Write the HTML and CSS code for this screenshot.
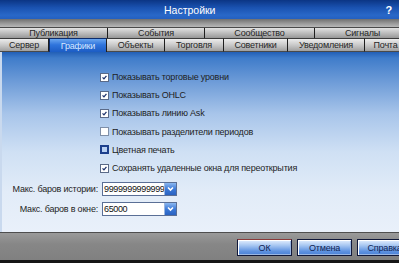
FILE: index.html
```html
<!DOCTYPE html>
<html lang="ru">
<head>
<meta charset="utf-8">
<title>Настройки</title>
<link rel="stylesheet" href="styles.css">
</head>
<body>
<div class="window">
  <div class="titlebar">
    <span class="title">Настройки</span>
    <span class="help">?</span>
  </div>
  <div class="sep"></div>
  <div class="tabrow upper">
    <div class="tab w-pub">Публикация</div>
    <div class="tab w-evt">События</div>
    <div class="tab w-com">Сообщество</div>
    <div class="tab w-sig">Сигналы</div>
  </div>
  <div class="tabrow lower">
    <div class="tab w-srv">Сервер</div>
    <div class="tab w-gr active">Графики</div>
    <div class="tab w-obj">Объекты</div>
    <div class="tab w-trd">Торговля</div>
    <div class="tab w-adv">Советники</div>
    <div class="tab w-ntf">Уведомления</div>
    <div class="tab w-mail">Почта</div>
  </div>
  <div class="content">
    <ul class="checks">
      <li><span class="box checked"><svg viewBox="0 0 9 9"><path d="M2 4.3 L3.8 6.2 L7 2.4" fill="none" stroke="#1a2f6a" stroke-width="1.6"/></svg></span>Показывать торговые уровни</li>
      <li><span class="box checked"><svg viewBox="0 0 9 9"><path d="M2 4.3 L3.8 6.2 L7 2.4" fill="none" stroke="#1a2f6a" stroke-width="1.6"/></svg></span>Показывать OHLC</li>
      <li><span class="box checked"><svg viewBox="0 0 9 9"><path d="M2 4.3 L3.8 6.2 L7 2.4" fill="none" stroke="#1a2f6a" stroke-width="1.6"/></svg></span>Показывать линию Ask</li>
      <li><span class="box"></span>Показывать разделители периодов</li>
      <li><span class="box hover"></span>Цветная печать</li>
      <li><span class="box checked"><svg viewBox="0 0 9 9"><path d="M2 4.3 L3.8 6.2 L7 2.4" fill="none" stroke="#1a2f6a" stroke-width="1.6"/></svg></span>Сохранять удаленные окна для переоткрытия</li>
    </ul>
    <div class="fields">
      <label class="lbl">Макс. баров истории:</label>
      <div class="combo"><span class="val">9999999999999<span class="caret"></span></span><span class="drop"><svg viewBox="0 0 11 12"><path d="M3 4.5 L5.5 7 L8 4.5" fill="none" stroke="#fff" stroke-width="1.6"/></svg></span></div>
      <label class="lbl">Макс. баров в окне:</label>
      <div class="combo"><span class="val">65000</span><span class="drop"><svg viewBox="0 0 11 12"><path d="M3 4.5 L5.5 7 L8 4.5" fill="none" stroke="#fff" stroke-width="1.6"/></svg></span></div>
    </div>
  </div>
  <div class="footer">
    <button class="btn focus">ОК</button>
    <button class="btn">Отмена</button>
    <button class="btn">Справка</button>
  </div>
</div>
</body>
</html>
```

FILE: styles.css
```css
html, body {
  margin: 0;
  padding: 0;
}
body {
  width: 399px;
  height: 263px;
  overflow: hidden;
  font-family: "Liberation Sans", Arial, sans-serif;
  font-size: 9px;
  letter-spacing: -0.2px;
  color: #1e1e1e;
}
.window {
  display: flex;
  flex-direction: column;
  width: 399px;
  height: 263px;
  overflow: hidden;
}
.titlebar {
  flex: none;
  height: 19px;
  display: flex;
  align-items: center;
  background: linear-gradient(#0b3584, #1a52b0 40%, #2968c8 80%, #2460c0);
}
.title {
  margin-left: 164px;
  color: #fff;
  font-size: 10.5px;
  letter-spacing: 0;
}
.help {
  margin-left: auto;
  margin-right: 7px;
  color: #fff;
  font-weight: bold;
  font-size: 11px;
}
.sep {
  flex: none;
  height: 8px;
  background: linear-gradient(#6f6f6f, #9d9d9d 60%, #b8b8b8);
}
.tabrow {
  flex: none;
  display: flex;
}
.upper {
  height: 11px;
  border-top: 1px solid #4a4a4a;
  box-sizing: border-box;
}
.lower {
  height: 14px;
}
.tab {
  flex: none;
  box-sizing: border-box;
  display: flex;
  align-items: center;
  justify-content: center;
  border-right: 1px solid #1e1e1e;
  color: #262626;
  background: linear-gradient(#ececec, #c9c9c9 50%, #9f9f9f);
  white-space: nowrap;
}
.upper .tab {
  background: linear-gradient(#e2e2e2, #bdbdbd 50%, #979797);
}
.lower .tab {
  border-top: 1px solid #3c3c3c;
  border-bottom: 1px solid #4a4a4a;
}
.tab.active {
  color: #d6e8ff;
  border-top: 1px solid #0c2c6c;
  border-left: 1px solid #0c2c6c;
  border-bottom: none;
  background: linear-gradient(#6aa6f0, #2f74dc 45%, #1c5cc4);
}
.w-pub { width: 108px; }
.w-evt { width: 97px; }
.w-com { width: 110px; }
.w-sig { width: 96px; }
.w-srv { width: 49px; }
.w-gr { width: 58px; }
.w-obj { width: 58px; }
.w-trd { width: 59px; }
.w-adv { width: 64px; }
.w-ntf { width: 77px; }
.w-mail { width: 42px; }

.content {
  flex: none;
  height: 180px;
  box-sizing: border-box;
  border-left: 2px solid #c9d9ee;
  background: linear-gradient(#225fb6 0, #3f7cca 6px, #6e9cd8 30px, #a8c5ea 62px, #cfe0f4 100px, #e2ecf8 140px, #e9f0fa 180px);
}
.checks {
  list-style: none;
  margin: 0;
  padding: 16px 0 0 98px;
}
.checks li {
  height: 18.2px;
  display: flex;
  align-items: center;
  white-space: nowrap;
}
.box {
  flex: none;
  width: 9px;
  height: 9px;
  box-sizing: border-box;
  margin-right: 3px;
  border: 1px solid #7f8fa8;
  background: #fff;
  display: flex;
}
.box svg {
  width: 7px;
  height: 7px;
  margin: 0;
}
.box.checked {
  border-color: #5a6a88;
}
.box.hover {
  border: 2px solid #1c3f8c;
  background: #b8d0f2;
}
.fields {
  display: grid;
  grid-template-columns: 96px 75px;
  column-gap: 4px;
  row-gap: 6px;
  margin-top: 5px;
}
.lbl {
  text-align: right;
  align-self: center;
  white-space: nowrap;
}
.combo {
  height: 14px;
  box-sizing: border-box;
  border: 1px solid #5a6f96;
  background: #fff;
  display: flex;
  align-items: stretch;
}
.val {
  flex: 1;
  min-width: 0;
  padding-left: 1px;
  display: flex;
  align-items: center;
  color: #111;
  letter-spacing: -0.35px;
  overflow: hidden;
}
.caret {
  flex: none;
  width: 1px;
  height: 10px;
  background: #000;
  margin-left: 1px;
}
.drop {
  flex: none;
  width: 11px;
  background: linear-gradient(#8cb8f0, #3c7ad8 50%, #2a62c0);
  border-left: 1px solid #9bb6de;
  display: flex;
}
.drop svg {
  width: 11px;
  height: 12px;
}
.footer {
  flex: 1;
  box-sizing: border-box;
  border-top: 1px solid #4e4e4e;
  border-bottom: 3px solid #161616;
  background: linear-gradient(#9a9a9a, #878787 40%, #808080);
  display: flex;
  align-items: flex-start;
  padding: 6px 0 0 237px;
  gap: 5px;
}
.btn {
  flex: none;
  width: 55px;
  height: 17px;
  margin: 0;
  padding: 0;
  font-family: "Liberation Sans", Arial, sans-serif;
  font-size: 9px;
  letter-spacing: -0.2px;
  color: #0f2456;
  border: 1px solid #10183a;
  box-shadow: inset 1px 1px 0 #ffffff, inset -1px -1px 0 #9ab6e2;
  background: linear-gradient(#e4efff, #a9c8f2 35%, #5e92e0 75%, #4a80d4);
}
.btn.focus {
  border-top-color: #8a3a3a;
}
```
